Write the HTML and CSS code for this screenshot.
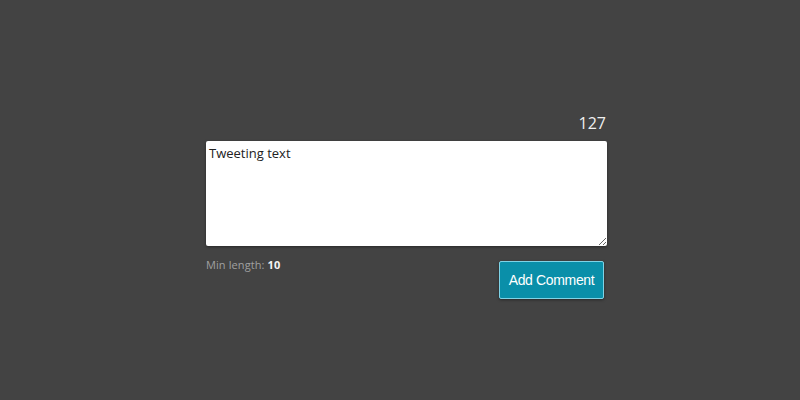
FILE: index.html
```html
<!DOCTYPE html>
<html>
<head>
<meta charset="utf-8">
<link rel="stylesheet" href="styles.css">
</head>
<body>
<div class="wrap">
  <div class="counter">127</div>
  <textarea class="box">Tweeting text</textarea>
  <div class="footer">
    <div class="min">Min length: <b>10</b></div>
    <button class="btn">Add Comment</button>
  </div>
</div>
</body>
</html>
```
FILE: styles.css
```css
html, body {
  margin: 0;
  padding: 0;
  background: #434343;
  height: 100%;
}
body {
  font-family: "Open Sans", sans-serif;
}
.wrap {
  width: 401px;
  margin-left: 206px;
  padding-top: 112px;
  display: flex;
  flex-direction: column;
}
.counter {
  text-align: right;
  color: #f0f0f0;
  font-size: 16px;
  line-height: 22px;
  padding-right: 1px;
  margin-bottom: 7px;
}
.box {
  box-sizing: border-box;
  width: 401px;
  height: 105px;
  border: none;
  border-radius: 2px;
  padding: 3px 3px;
  font-family: "Open Sans", sans-serif;
  font-size: 13px;
  line-height: 18px;
  color: #222;
  background: #fff;
  box-shadow: 0 1px 3px rgba(0,0,0,0.4);
  resize: vertical;
  outline: none;
}
.footer {
  display: flex;
  justify-content: space-between;
  align-items: flex-start;
  margin-top: 12px;
}
.min {
  color: #a0a0a0;
  font-size: 11px;
  line-height: 14px;
  letter-spacing: 0.1px;
}
.min b {
  color: #f4f4f4;
  font-weight: 700;
}
.btn {
  margin-top: 3px;
  margin-right: 3px;
  width: 105px;
  height: 38px;
  border: 1px solid #7fd3e6;
  border-radius: 2px;
  background: #0a8fa9;
  color: #fff;
  font-family: "Liberation Sans", Arial, sans-serif;
  font-size: 14px;
  letter-spacing: -0.35px;
  box-shadow: 0 1px 3px rgba(0,0,0,0.4);
  padding: 0;
}
```
